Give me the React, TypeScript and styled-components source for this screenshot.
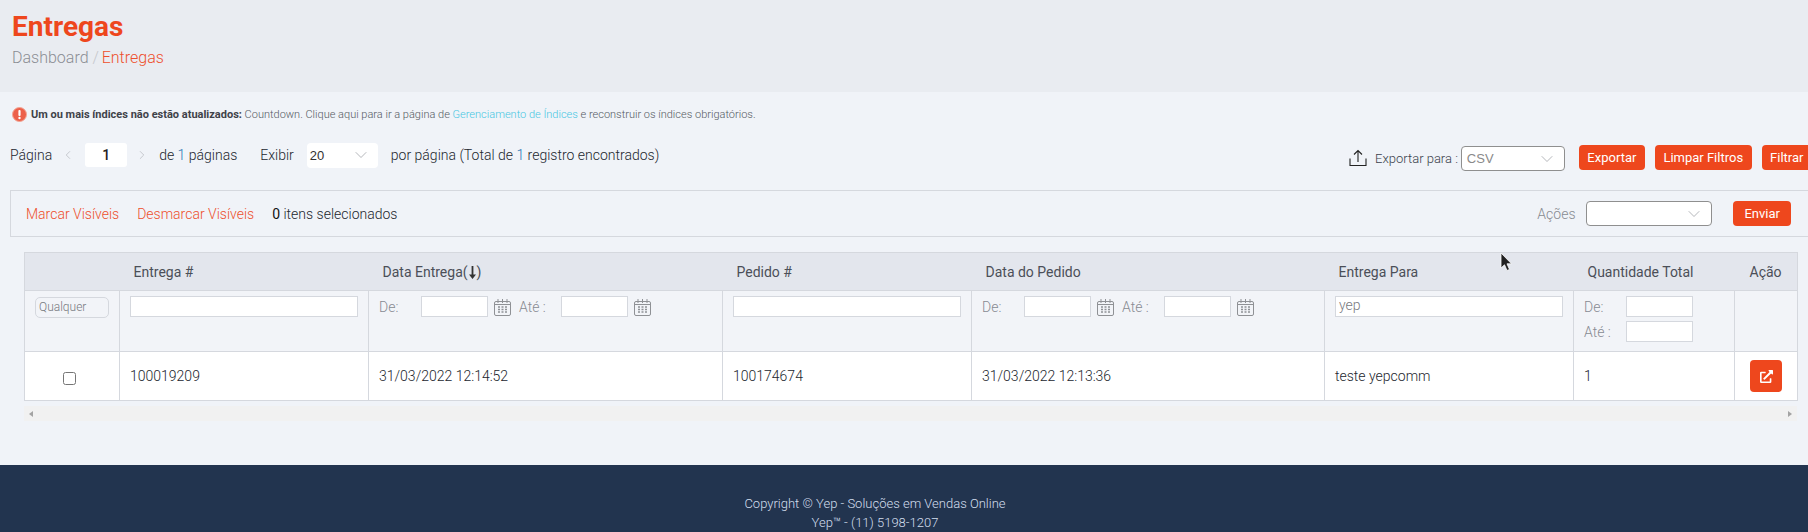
import React from 'react';
import styled, { createGlobalStyle } from 'styled-components';
import { ChevronDown, ChevronLeft, ChevronRight } from 'lucide-react';
import { FaExternalLinkAlt } from 'react-icons/fa';

const GlobalStyle = createGlobalStyle`
  html, body {
    margin: 0;
    padding: 0;
    overflow: hidden;
    background: #f0f3f8;
    font-family: Roboto, "Liberation Sans", sans-serif;
    font-weight: 300;
    color: #22262e;
  }
  * { box-sizing: border-box; }
`;

const Page = styled.div`
  position: relative;
  width: 1808px;
  height: 532px;
  overflow: hidden;
  display: flex;
  flex-direction: column;
`;

const PageHead = styled.header`
  height: 92px;
  padding: 10px 12px 0;
  background: #e9ecf1;
  flex: none;
`;

const Title = styled.h1`
  margin: 0;
  font-size: 28px;
  line-height: 33px;
  font-weight: 700;
  color: #ee471d;
`;

const Breadcrumb = styled.div`
  margin-top: 5px;
  font-size: 16px;
  line-height: 19px;
  color: #8b8e94;

  i { font-style: normal; color: #c5c7cb; }
  span { margin-left: -1px; color: #ee4f2c; }
`;

const Content = styled.main`
  flex: 1;
  padding: 0 0 0 10px;
`;

const Alert = styled.div`
  display: flex;
  align-items: center;
  gap: 4px;
  height: 16px;
  margin: 14px 0 0 2px;
  font-size: 11px;
  color: #555a63;

  b { color: #3f4249; font-weight: 700; }
  a { color: #45c6e2; text-decoration: none; }
`;

const PagerRow = styled.div`
  display: flex;
  align-items: center;
  height: 26px;
  margin: 20px -4px 0 0;
  font-size: 14px;
`;

const PagerText = styled.span<{ $left?: number }>`
  margin-left: ${(p) => p.$left ?? 0}px;

  em { font-style: normal; color: #2f78b7; }
`;

const PageInput = styled.div`
  width: 42px;
  height: 24px;
  margin-left: 10px;
  background: #fff;
  border-radius: 3px;
  font-size: 14px;
  font-weight: 500;
  line-height: 24px;
  text-align: center;
  color: #222;
`;

const PagerArrow = styled.span<{ $left?: number }>`
  display: flex;
  width: 14px;
  margin-left: ${(p) => p.$left ?? 9}px;
  justify-content: center;
  color: #b3b6bc;
`;

const SelectBox = styled.div<{ $w: number; $plain?: boolean }>`
  display: flex;
  align-items: center;
  justify-content: space-between;
  width: ${(p) => p.$w}px;
  height: 25px;
  padding: 0 7px 0 ${(p) => (p.$plain ? 3 : 5)}px;
  background: #fff;
  border: ${(p) => (p.$plain ? 'none' : '1px solid #8f8f8f')};
  border-radius: 4px;
  font-family: "Liberation Sans", sans-serif;
  font-weight: 400;
  font-size: 13px;
  color: ${(p) => (p.$plain ? '#333' : '#8a8a8a')};

  svg { color: #a6a8ad; }
`;

const PageSizeSelect = styled(SelectBox)`
  margin-left: 13px;
`;

const ExportSelect = styled(SelectBox)`
  margin-top: 2px;
`;

const ExportGroup = styled.div`
  display: flex;
  align-items: center;
  margin: 5px 0 0 auto;
  font-size: 13px;
`;

const ExportLabel = styled.span`
  margin: 2px 3px 0 8px;
  color: #3a3f4b;
`;

const Btn = styled.button<{ $ml?: number; $pad?: number }>`
  height: 25px;
  margin-left: ${(p) => p.$ml ?? 10}px;
  padding: 0 ${(p) => p.$pad ?? 8.5}px;
  border: none;
  border-radius: 4px;
  background: #ee471d;
  color: #fff;
  font-family: Roboto, sans-serif;
  font-size: 13px;
`;

const MassBar = styled.div`
  display: flex;
  align-items: center;
  height: 47px;
  margin-top: 22px;
  padding: 0 17px 0 15px;
  border: 1px solid #d5d8de;
  border-right: none;
  font-size: 14px;
`;

const BarLink = styled.a`
  margin-right: 18px;
  color: #ee4f2c;
`;

const BarCount = styled.span`
  color: #22262e;

  b { color: #111; }
`;

const ActionsGroup = styled.div`
  display: flex;
  align-items: center;
  margin-left: auto;
`;

const ActionsLabel = styled.span`
  margin-right: 11px;
  color: #888b92;
`;

const TableWrap = styled.div`
  width: 1773px;
  margin: 15px 0 0 14px;
`;

const Grid = styled.table`
  width: 1773px;
  table-layout: fixed;
  border-collapse: collapse;
  font-size: 14px;
`;

const HeadCell = styled.th`
  height: 38px;
  padding: 0 0 0 14px;
  background: #e3e6ed;
  border-top: 1px solid #d5d8de;
  border-bottom: 1px solid #d5d8de;
  font-weight: 400;
  text-align: left;
  color: #4b4f58;

  &:first-child { border-left: 1px solid #d5d8de; }
  &:last-child { border-right: 1px solid #d5d8de; padding-left: 15px; }
`;

const SortIcon = styled.svg`
  margin: 0 1px;
  vertical-align: -2px;
`;

const FilterCell = styled.td`
  height: 61px;
  padding: 5px 10px 0;
  vertical-align: top;
  background: #f2f4f8;
  border: 1px solid #d5d8de;
`;

const DataCell = styled.td<{ $center?: boolean }>`
  height: 49px;
  padding: 0 10px;
  background: #fff;
  border: 1px solid #d5d8de;
  text-align: ${(p) => (p.$center ? 'center' : 'left')};
  font-weight: 300;
  color: #22262e;
`;

const AnySelect = styled.div`
  width: 74px;
  height: 21px;
  margin: 1px 0 0;
  padding-left: 3px;
  border: 1px solid #d5d8de;
  border-radius: 5px;
  font-size: 12px;
  line-height: 18px;
  color: #777a80;
`;

const TextBox = styled.div<{ $w?: number }>`
  width: ${(p) => (p.$w ? `${p.$w}px` : '100%')};
  height: 21px;
  padding-left: 3px;
  background: #fff;
  border: 1px solid #d5d8de;
  font-size: 14px;
  line-height: 17px;
  color: #777a80;
`;

const DateFilter = styled.div`
  display: flex;
  align-items: center;
  height: 21px;
`;

const FilterLabel = styled.span<{ $w: number }>`
  width: ${(p) => p.$w}px;
  flex: none;
  color: #888b92;
`;

const QtyLine = styled.div`
  display: flex;
  align-items: center;
  height: 21px;
  margin-bottom: 4px;
`;

const CheckBox = styled.input`
  width: 13px;
  height: 13px;
  margin: 5px 6px 0 0;
  vertical-align: middle;
`;

const OpenBtn = styled.button`
  display: inline-flex;
  align-items: center;
  justify-content: center;
  width: 32px;
  height: 32px;
  padding: 0;
  border: none;
  border-radius: 4px;
  background: #ee471d;
  color: #fff;
`;

const ScrollTrack = styled.div`
  display: flex;
  align-items: center;
  justify-content: space-between;
  height: 15px;
  margin-top: 5px;
  padding: 0 5px;
  background: #f1f1f1;
`;

const ScrollArrow = styled.span<{ $right?: boolean }>`
  width: 0;
  height: 0;
  border-top: 3.5px solid transparent;
  border-bottom: 3.5px solid transparent;
  ${(p) => (p.$right ? 'border-left: 4px solid #a3a3a3;' : 'border-right: 4px solid #a3a3a3;')}
`;

const Footer = styled.footer`
  flex: none;
  height: 67px;
  padding: 29px 58px 0 0;
  background: #22344f;
  color: #d3dfee;
  font-size: 13px;
  line-height: 19px;
  text-align: center;
`;

const Cursor = styled.svg`
  position: absolute;
  left: 1500px;
  top: 252px;
`;

const CalIcon = styled.svg`
  flex: none;
  margin: 0 8px 0 6px;
`;

const Calendar = () => (
  <CalIcon width="17" height="18" viewBox="0 0 17 18" fill="none" stroke="#8f9195">
    <rect x="0.5" y="3.5" width="16" height="14" rx="1.5" />
    <path d="M0.5 6.5h16M4 1v4M8.5 1v4M13 1v4" />
    <path d="M4 9h2M7.5 9h2M11 9h2M4 11.5h2M7.5 11.5h2M11 11.5h2M4 14h2M7.5 14h2M11 14h2" strokeWidth="1.4" />
  </CalIcon>
);

const DateRange = () => (
  <DateFilter>
    <FilterLabel $w={42}>De:</FilterLabel>
    <TextBox $w={67} />
    <Calendar />
    <FilterLabel $w={42}>Até :</FilterLabel>
    <TextBox $w={67} />
    <Calendar />
  </DateFilter>
);

const widths = [95, 249, 354, 249, 353, 249, 161, 63];

export default function App() {
  return (
    <Page>
      <GlobalStyle />
      <PageHead>
        <Title>Entregas</Title>
        <Breadcrumb>
          Dashboard <i>/</i> <span>Entregas</span>
        </Breadcrumb>
      </PageHead>

      <Content>
        <Alert>
          <svg width="15" height="15" viewBox="0 0 15 15">
            <circle cx="7.5" cy="7.5" r="7" fill="#ec5f49" stroke="#f3a594" />
            <rect x="6.4" y="3" width="2.2" height="6" rx="0.9" fill="#fff" />
            <circle cx="7.5" cy="11" r="1.2" fill="#fff" />
          </svg>
          <span>
            <b>Um ou mais índices não estão atualizados:</b> Countdown. Clique aqui para ir a página de{' '}
            <a href="#indices">Gerenciamento de Índices</a> e reconstruir os índices obrigatórios.
          </span>
        </Alert>

        <PagerRow>
          <PagerText>Página</PagerText>
          <PagerArrow>
            <ChevronLeft size={16} strokeWidth={1.2} />
          </PagerArrow>
          <PageInput>1</PageInput>
          <PagerArrow $left={8}>
            <ChevronRight size={16} strokeWidth={1.2} />
          </PagerArrow>
          <PagerText $left={10}>
            de <em>1</em> páginas
          </PagerText>
          <PagerText $left={23}>Exibir</PagerText>
          <PageSizeSelect $w={71} $plain>
            20
            <ChevronDown size={20} strokeWidth={1} />
          </PageSizeSelect>
          <PagerText $left={13}>
            por página (Total de <em>1</em> registro encontrados)
          </PagerText>

          <ExportGroup>
            <svg width="18" height="18" viewBox="0 0 18 18" fill="none" stroke="#222" strokeWidth="1.1">
              <path d="M1 9.5V16.5H17V9.5M9 13V1.5M5 5.5L9 1.5L13 5.5" />
            </svg>
            <ExportLabel>Exportar para :</ExportLabel>
            <ExportSelect $w={104}>
              CSV
              <ChevronDown size={20} strokeWidth={1} />
            </ExportSelect>
            <Btn $ml={14}>Exportar</Btn>
            <Btn>Limpar Filtros</Btn>
            <Btn>Filtrar</Btn>
          </ExportGroup>
        </PagerRow>

        <MassBar>
          <BarLink>Marcar Visíveis</BarLink>
          <BarLink>Desmarcar Visíveis</BarLink>
          <BarCount>
            <b>0</b> itens selecionados
          </BarCount>
          <ActionsGroup>
            <ActionsLabel>Ações</ActionsLabel>
            <SelectBox $w={126}>
              <span />
              <ChevronDown size={20} strokeWidth={1} />
            </SelectBox>
            <Btn $ml={21} $pad={11}>Enviar</Btn>
          </ActionsGroup>
        </MassBar>

        <TableWrap>
          <Grid>
            <colgroup>
              {widths.map((w, i) => (
                <col key={i} style={{ width: w }} />
              ))}
            </colgroup>
            <thead>
              <tr>
                <HeadCell />
                <HeadCell>Entrega #</HeadCell>
                <HeadCell>
                  Data Entrega(
                  <SortIcon width="7" height="13" viewBox="0 0 7 13" fill="#333" stroke="none">
                    <path d="M2.6 0H4.4V8.5H7L3.5 13L0 8.5H2.6Z" />
                  </SortIcon>
                  )
                </HeadCell>
                <HeadCell>Pedido #</HeadCell>
                <HeadCell>Data do Pedido</HeadCell>
                <HeadCell>Entrega Para</HeadCell>
                <HeadCell>Quantidade Total</HeadCell>
                <HeadCell>Ação</HeadCell>
              </tr>
              <tr>
                <FilterCell>
                  <AnySelect>Qualquer</AnySelect>
                </FilterCell>
                <FilterCell><TextBox /></FilterCell>
                <FilterCell><DateRange /></FilterCell>
                <FilterCell><TextBox /></FilterCell>
                <FilterCell><DateRange /></FilterCell>
                <FilterCell><TextBox>yep</TextBox></FilterCell>
                <FilterCell>
                  <QtyLine>
                    <FilterLabel $w={42}>De:</FilterLabel>
                    <TextBox $w={67} />
                  </QtyLine>
                  <QtyLine>
                    <FilterLabel $w={42}>Até :</FilterLabel>
                    <TextBox $w={67} />
                  </QtyLine>
                </FilterCell>
                <FilterCell />
              </tr>
            </thead>
            <tbody>
              <tr>
                <DataCell $center><CheckBox type="checkbox" readOnly /></DataCell>
                <DataCell>100019209</DataCell>
                <DataCell>31/03/2022 12:14:52</DataCell>
                <DataCell>100174674</DataCell>
                <DataCell>31/03/2022 12:13:36</DataCell>
                <DataCell>teste yepcomm</DataCell>
                <DataCell>1</DataCell>
                <DataCell $center>
                  <OpenBtn><FaExternalLinkAlt size={13} /></OpenBtn>
                </DataCell>
              </tr>
            </tbody>
          </Grid>
          <ScrollTrack>
            <ScrollArrow />
            <ScrollArrow $right />
          </ScrollTrack>
        </TableWrap>
      </Content>

      <Footer>
        Copyright © Yep - Soluções em Vendas Online
        <br />
        Yep™ - (11) 5198-1207
      </Footer>

      <Cursor width="13" height="20" viewBox="0 0 13 20">
        <path d="M1 1V16L4.5 12.8L7 18.5L9.5 17.4L7 11.8H11.5Z" fill="#222" stroke="#fff" strokeWidth="0.8" />
      </Cursor>
    </Page>
  );
}
